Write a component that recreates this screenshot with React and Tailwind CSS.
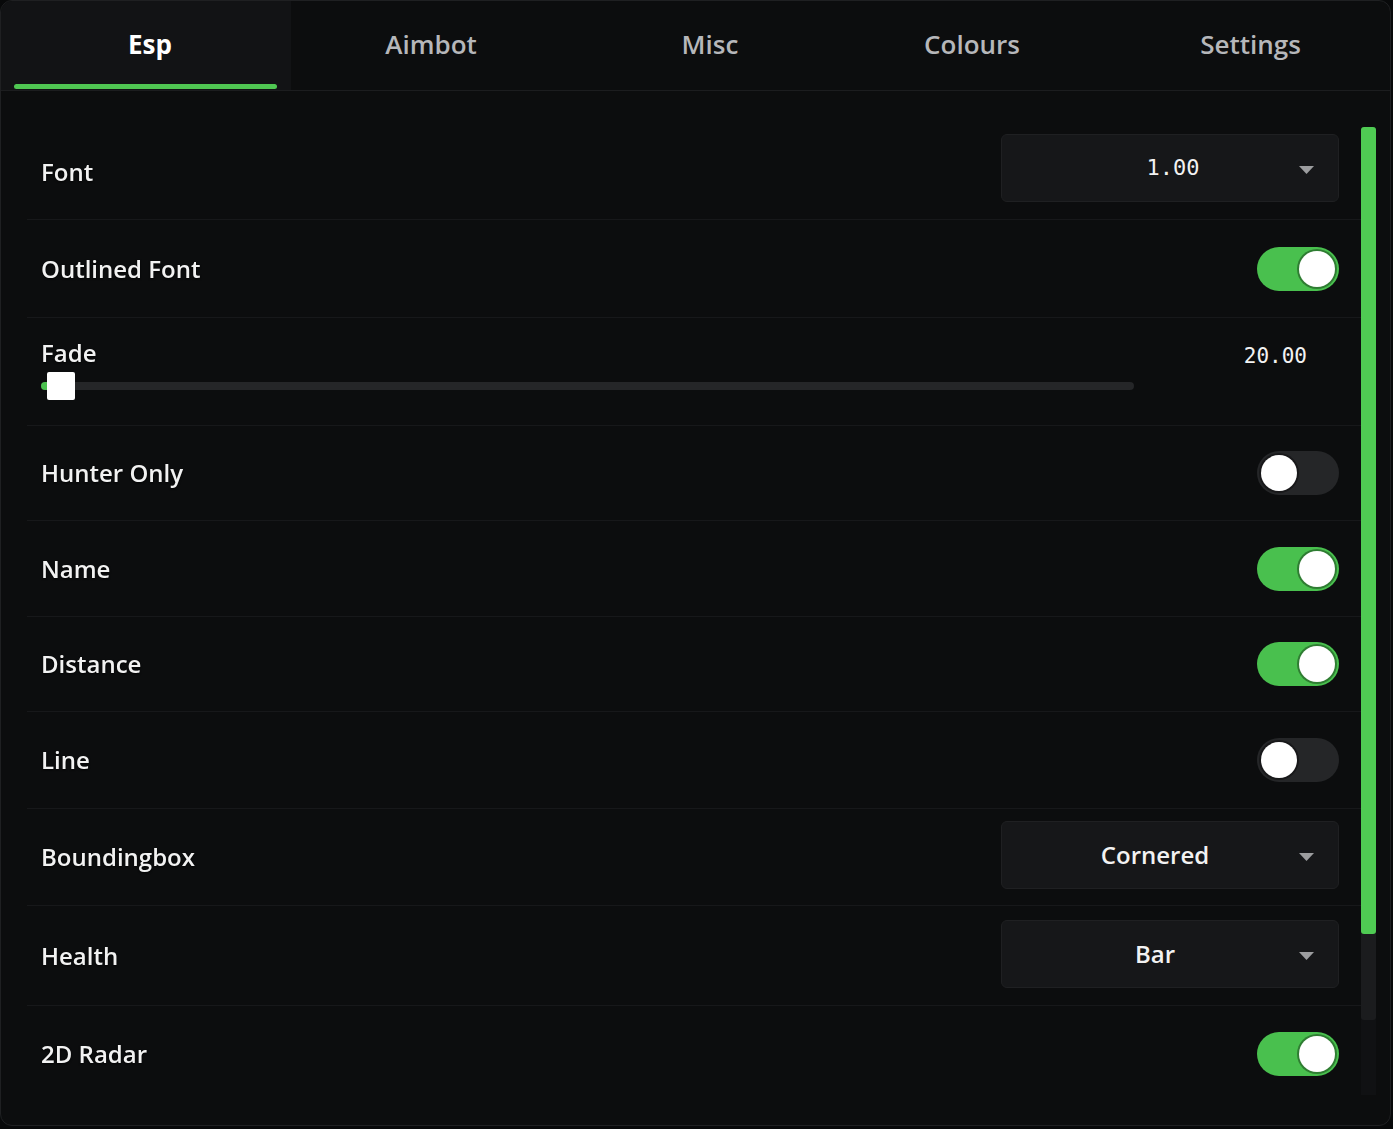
import React, { useState } from "react";

const tabs = [
  { name: "Esp", cls: "w-[290px] pl-[8px]" },
  { name: "Aimbot", cls: "w-[280px]" },
  { name: "Misc", cls: "w-[278px]" },
  { name: "Colours", cls: "w-[246px]" },
  { name: "Settings", cls: "flex-1 pl-[16px]" },
];

function Toggle({ on }) {
  return (
    <div
      className={`w-[82px] h-[44px] rounded-full p-[4px] flex items-center ${
        on ? "bg-[#49c04e] justify-end" : "bg-[#252628] justify-start"
      }`}
    >
      <div className="w-[36px] h-[36px] rounded-full bg-white shadow-[0_0_0_2px_rgba(0,0,0,0.35)]" />
    </div>
  );
}

function Dropdown({ value, mono, className = "" }) {
  return (
    <div
      className={`relative w-[338px] h-[68px] rounded-[6px] bg-[#161719] border border-[#1f2022] flex items-center justify-center ${
        mono ? "pl-[6px]" : "pr-[30px]"
      } ${className}`}
    >
      <span
        className={
          mono
            ? "text-[22px] text-[#f2f2f2] font-['DejaVu_Sans_Mono',monospace]"
            : "text-[24px] font-semibold text-[#f2f2f2]"
        }
      >
        {value}
      </span>
      <svg
        className="absolute right-[24px] top-1/2 -translate-y-[2px]"
        width="15"
        height="8"
        viewBox="0 0 15 8"
      >
        <path d="M0 0h15L7.5 8z" fill="#9c9d9f" />
      </svg>
    </div>
  );
}

function Row({ label, children, h = "h-[96px]", border = true }) {
  return (
    <div
      className={`${h} flex items-center justify-between pl-[14px] pr-[22px] ${
        border ? "border-b border-[#17181a]" : ""
      }`}
    >
      <span className="text-[24px] font-semibold text-[#f2f2f2] drop-shadow-[0_1px_1px_rgba(0,0,0,0.8)]">
        {label}
      </span>
      {children}
    </div>
  );
}

export default function App() {
  const [active, setActive] = useState(0);

  return (
    <div className="min-h-screen bg-[#08090a] font-['Open_Sans',sans-serif]">
      <div className="w-[1391px] h-[1126px] bg-[#0c0d0e] border border-[#1f2022] rounded-[12px] overflow-hidden flex flex-col">
        <div className="h-[90px] flex border-b border-[#1c1d1f] shrink-0">
          {tabs.map((t, i) => (
            <button
              key={t.name}
              onClick={() => setActive(i)}
              className={`relative flex items-center justify-center pb-[2px] text-[26px] ${t.cls} ${
                i === 0 ? "rounded-tl-[10px]" : ""
              } ${
                active === i
                  ? "bg-[#121315] text-white font-bold"
                  : "text-[#b6b7ba] font-semibold"
              }`}
            >
              {t.name}
              {active === i && (
                <span className="absolute left-[13px] right-[14px] bottom-[1px] h-[5px] rounded-full bg-[#4fc752]" />
              )}
            </button>
          ))}
        </div>

        <div className="flex-1 flex pl-[26px] pr-[14px]">
          <div className="flex-1 pt-[33px]">
            <Row label="Font">
              <Dropdown value="1.00" mono className="-mt-[8px]" />
            </Row>
            <Row label="Outlined Font" h="h-[98px]">
              <Toggle on />
            </Row>
            <div className="h-[108px] pl-[14px] pr-[54px] pt-[15px] border-b border-[#17181a] flex flex-col">
              <div className="flex items-center justify-between">
                <span className="text-[24px] font-semibold text-[#f2f2f2] drop-shadow-[0_1px_1px_rgba(0,0,0,0.8)]">
                  Fade
                </span>
                <span className="text-[21px] text-[#f2f2f2] font-['DejaVu_Sans_Mono',monospace] mt-[8px]">
                  20.00
                </span>
              </div>
              <div className="relative mt-[9px] w-[1093px] h-[8px] rounded-full bg-[#252628]">
                <div className="absolute left-0 top-0 h-[8px] w-[10px] rounded-full bg-[#4cc250]" />
                <div className="absolute left-[6px] top-[-10px] w-[28px] h-[28px] rounded-[2px] bg-white" />
              </div>
            </div>
            <Row label="Hunter Only" h="h-[95px]">
              <Toggle on={false} />
            </Row>
            <Row label="Name">
              <Toggle on />
            </Row>
            <Row label="Distance" h="h-[95px]">
              <Toggle on />
            </Row>
            <Row label="Line" h="h-[97px]">
              <Toggle on={false} />
            </Row>
            <Row label="Boundingbox" h="h-[97px]">
              <Dropdown value="Cornered" className="-mt-[4px]" />
            </Row>
            <Row label="Health" h="h-[100px]">
              <Dropdown value="Bar" className="-mt-[4px]" />
            </Row>
            <Row label="2D Radar" h="h-[96px]" border={false}>
              <Toggle on />
            </Row>
          </div>

          <div className="w-[15px] mt-[36px] mb-[30px] flex flex-col bg-[#101113] rounded-t-[3px]">
            <div className="h-[893px] rounded-[3px] bg-[#1b1c1e] flex flex-col">
              <div className="h-[807px] rounded-[3px] bg-[#4fcb53]" />
            </div>
          </div>
        </div>
      </div>
    </div>
  );
}
